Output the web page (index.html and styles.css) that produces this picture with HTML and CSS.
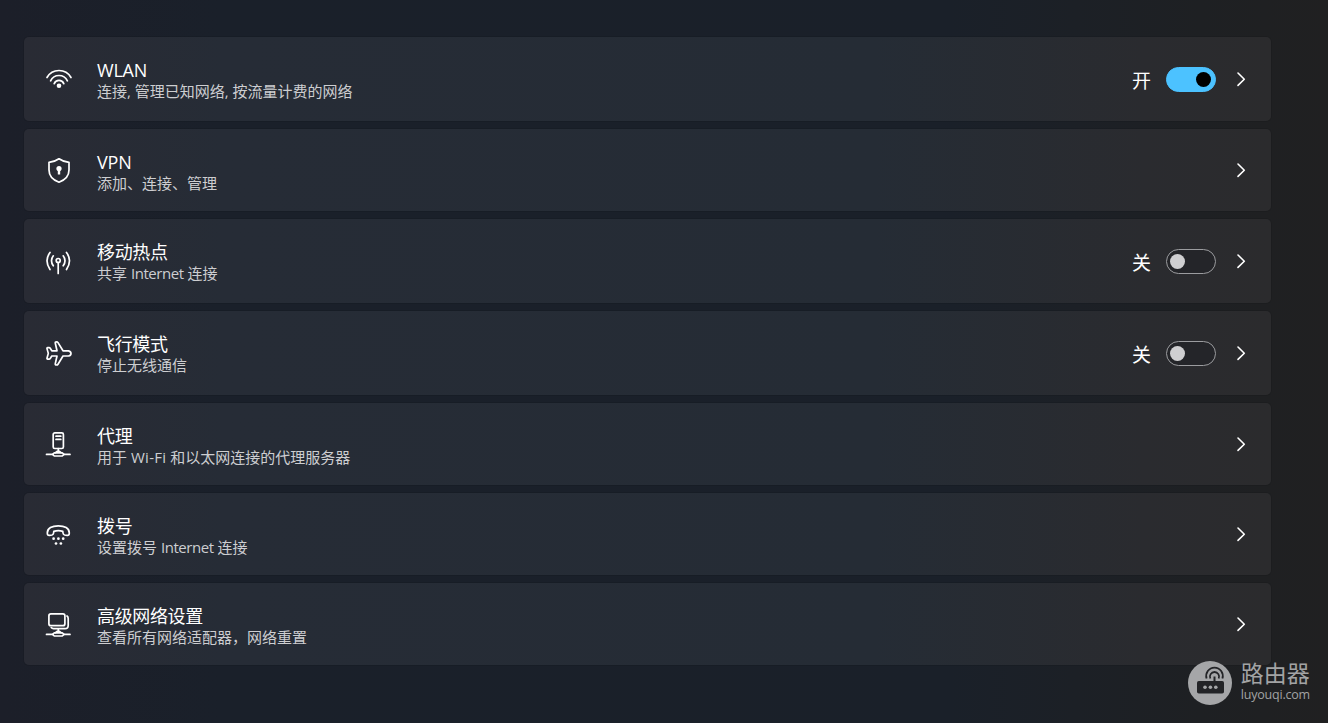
FILE: index.html
```html
<!DOCTYPE html>
<html lang="zh-CN">
<head>
    <meta charset="UTF-8">
    <meta name="viewport" content="width=device-width, initial-scale=1.0">
    <title>网络和 Internet</title>
    <link rel="stylesheet" href="styles.css">
</head>
<body>
    <div class="list">
        <div class="row tall">
            <svg class="icon" viewBox="0 0 28 28"><path d="M2 12.5A13.8 13.8 0 0 1 26 12.5M5.6 15.8A9.3 9.3 0 0 1 22.4 15.8M9.2 18.6A5.2 5.2 0 0 1 18.8 18.6"/><circle class="fill" cx="14" cy="20.8" r="2.3"/></svg>
            <div class="text">
                <div class="title latin">WLAN</div>
                <div class="sub">连接, 管理已知网络, 按流量计费的网络</div>
            </div>
            <span class="state">开</span>
            <div class="toggle on"></div>
            <svg class="chevron" viewBox="0 0 10 16"><path d="M2 2L8.3 8.2L2 14.4"/></svg>
        </div>
        <div class="row">
            <svg class="icon" viewBox="0 0 28 28"><path d="M14 2.8C11 5 8 6 4 6.3V14C4 20 8 24 14 26.2C20 24 24 20 24 14V6.3C20 6 17 5 14 2.8Z"/><circle class="fill" cx="14" cy="12.6" r="2.6"/><path d="M14 13V18.5" class="thick"/></svg>
            <div class="text">
                <div class="title latin">VPN</div>
                <div class="sub">添加、连接、管理</div>
            </div>
            <svg class="chevron" viewBox="0 0 10 16"><path d="M2 2L8.3 8.2L2 14.4"/></svg>
        </div>
        <div class="row tall">
            <svg class="icon" viewBox="0 0 28 28"><path d="M5 5.5Q-1 13.5 5 22.5M21.5 5.5Q27.5 13.5 21.5 22.5M8.3 8.8Q4.7 13.5 8.3 18.8M18.2 8.8Q21.8 13.5 18.2 18.8M13.2 15.5V26.5"/><circle cx="13.2" cy="13.5" r="2"/></svg>
            <div class="text">
                <div class="title">移动热点</div>
                <div class="sub">共享 <span class="word">Internet</span> 连接</div>
            </div>
            <span class="state">关</span>
            <div class="toggle"></div>
            <svg class="chevron" viewBox="0 0 10 16"><path d="M2 2L8.3 8.2L2 14.4"/></svg>
        </div>
        <div class="row tall">
            <svg class="icon" viewBox="0 0 28 28"><path d="M23.5 11.8H18L13 3.6Q12.5 2.8 11.5 2.8Q10 2.8 10.3 4.2L12 11.8H6.8L5.2 9.3Q4.8 8.7 4 8.7H2.6Q1.8 8.7 2 9.6L3.3 14.4L2 19.2Q1.8 20.1 2.6 20.1H4Q4.8 20.1 5.2 19.5L6.8 17H12L10.3 24.6Q10 26 11.5 26Q12.5 26 13 25.2L18 17H23.5Q26 16.4 26 14.4Q26 12.4 23.5 11.8Z"/></svg>
            <div class="text">
                <div class="title">飞行模式</div>
                <div class="sub">停止无线通信</div>
            </div>
            <span class="state">关</span>
            <div class="toggle"></div>
            <svg class="chevron" viewBox="0 0 10 16"><path d="M2 2L8.3 8.2L2 14.4"/></svg>
        </div>
        <div class="row">
            <svg class="icon" viewBox="0 0 28 28"><rect x="8.2" y="2.9" width="10.2" height="15.6" rx="1.6"/><path d="M11 6.2H15.8M11 9.4H15.8M13.3 18.5V20.5L10.5 22.7M13.3 20.5L16.1 22.7M1.5 24.4H7.5M19 24.4H25"/><path d="M9.3 22.9H17.3L19 24.4L17.3 26H9.3L7.6 24.4Z"/></svg>
            <div class="text">
                <div class="title">代理</div>
                <div class="sub">用于 <span class="wifi">Wi-Fi</span> 和以太网连接的代理服务器</div>
            </div>
            <svg class="chevron" viewBox="0 0 10 16"><path d="M2 2L8.3 8.2L2 14.4"/></svg>
        </div>
        <div class="row">
            <svg class="icon" viewBox="0 0 28 28"><path d="M2.3 13C2.3 8.2 7 5.8 13.3 5.8S24.3 8.2 24.3 13Q24.3 15.6 22.2 15.4L19.6 15Q18.2 14.7 18 13L17.8 11.4Q13.3 10 8.8 11.4L8.6 13Q8.4 14.7 7 15L4.4 15.4Q2.3 15.6 2.3 13Z"/><g class="fill"><circle cx="8.6" cy="18.7" r="1.35"/><circle cx="13.4" cy="18.7" r="1.35"/><circle cx="18.2" cy="18.7" r="1.35"/><circle cx="11" cy="23.5" r="1.35"/><circle cx="15.9" cy="23.5" r="1.35"/></g></svg>
            <div class="text">
                <div class="title">拨号</div>
                <div class="sub">设置拨号 <span class="word">Internet</span> 连接</div>
            </div>
            <svg class="chevron" viewBox="0 0 10 16"><path d="M2 2L8.3 8.2L2 14.4"/></svg>
        </div>
        <div class="row">
            <svg class="icon" viewBox="0 0 28 28"><rect x="3.9" y="3.9" width="16" height="11.8" rx="2"/><path d="M22 6Q23.2 6.8 23.2 8.4V15.2Q23.2 18.7 20 18.7H8.5Q7 18.7 6.2 17.6M13.3 18.7V20.5L10.5 22.7M13.3 20.5L16.1 22.7M1.5 24.4H7.5M19 24.4H25"/><path d="M9.3 22.9H17.3L19 24.4L17.3 26H9.3L7.6 24.4Z"/></svg>
            <div class="text">
                <div class="title">高级网络设置</div>
                <div class="sub">查看所有网络适配器，网络重置</div>
            </div>
            <svg class="chevron" viewBox="0 0 10 16"><path d="M2 2L8.3 8.2L2 14.4"/></svg>
        </div>
    </div>

    <div class="watermark">
        <svg class="logo" viewBox="0 0 44 44">
            <circle cx="22" cy="22" r="22" fill="#a5a6a8"/>
            <rect x="9" y="20" width="27" height="12.5" rx="1.8" fill="#232427"/>
            <g fill="none" stroke="#232427" stroke-width="1.8"><path d="M18.6 17.5A8.3 8.3 0 1 1 34.4 17.5M22.3 17.5A4.6 4.6 0 1 1 30.7 17.5"/></g>
            <path d="M26.5 15.5V20" stroke="#232427" stroke-width="2"/>
            <g fill="#a5a6a8"><circle cx="17" cy="26.2" r="1.8"/><circle cx="22.4" cy="26.2" r="1.8"/><circle cx="27.8" cy="26.2" r="1.8"/></g>
        </svg>
        <div>
            <div class="brand">路由器</div>
            <div class="site">luyouqi.com</div>
        </div>
    </div>
</body>
</html>
```
FILE: styles.css
```css
body {
    margin: 0;
    height: 723px;
    overflow: hidden;
    background: linear-gradient(90deg, #1c1f29 0, #1a202a 220px, #1a2029 950px, #1e2023 1200px, #202021 100%);
    color: #fff;
    font-family: "Open Sans", "Noto Sans CJK SC", sans-serif;
}
.list {
    display: flex;
    flex-direction: column;
    gap: 8px;
    padding: 37px 57px 0 24px;
}
.row {
    display: flex;
    align-items: center;
    box-sizing: border-box;
    height: 82px;
    padding: 0 25px 0 21px;
    border-radius: 5px;
    background: linear-gradient(90deg, #292b34 0, #262c36 200px, #252c35 850px, #2a2b2f 1120px, #2b2b2d 100%);
    box-shadow: 0 0 0 1px rgba(0, 0, 0, 0.08);
}
.tall {
    height: 84px;
}
.icon {
    width: 28px;
    height: 28px;
    margin-right: 24px;
}
.icon, .chevron {
    flex: none;
    fill: none;
    stroke: #fff;
    stroke-width: 1.7;
    stroke-linecap: round;
    stroke-linejoin: round;
}
.icon .fill {
    fill: #fff;
    stroke: none;
}
.icon .thick {
    stroke-width: 2.4;
    stroke-linecap: butt;
}
.text {
    flex: 1;
    padding-top: 5px;
    white-space: nowrap;
}
.tall .text {
    padding-top: 3px;
}
.title {
    font-size: 18px;
    line-height: 21px;
    letter-spacing: -0.35px;
}
.latin {
    font-size: 18px;
    letter-spacing: -0.2px;
}
.sub {
    font-size: 15px;
    line-height: 21px;
    color: #cdced1;
}
.word {
    letter-spacing: -0.45px;
}
.wifi {
    letter-spacing: 0.3px;
}
.state {
    padding-top: 2px;
    font-size: 19px;
    margin-right: 15px;
}
.toggle {
    display: flex;
    align-items: center;
    box-sizing: border-box;
    width: 50px;
    height: 25px;
    padding: 0 3px;
    margin-right: 20px;
    border: 1px solid #9b9c9f;
    border-radius: 13px;
    background: #242529;
}
.toggle::before {
    content: "";
    width: 15px;
    height: 15px;
    border-radius: 50%;
    background: #cfcfd1;
}
.toggle.on {
    justify-content: flex-end;
    padding: 0 4px;
    border-color: #4cc2ff;
    background: #4cc2ff;
}
.toggle.on::before {
    background: #000;
}
.chevron {
    width: 10px;
    height: 16px;
    stroke-width: 1.6;
}
.watermark {
    position: absolute;
    right: 18px;
    bottom: 18px;
    display: flex;
    align-items: center;
    gap: 9px;
    color: #a2a3a4;
}
.logo {
    width: 44px;
    height: 44px;
}
.brand {
    font-size: 23px;
    line-height: 25px;
    margin-top: -2px;
}
.site {
    font-size: 12.5px;
    line-height: 17px;
    letter-spacing: -0.2px;
}
```
